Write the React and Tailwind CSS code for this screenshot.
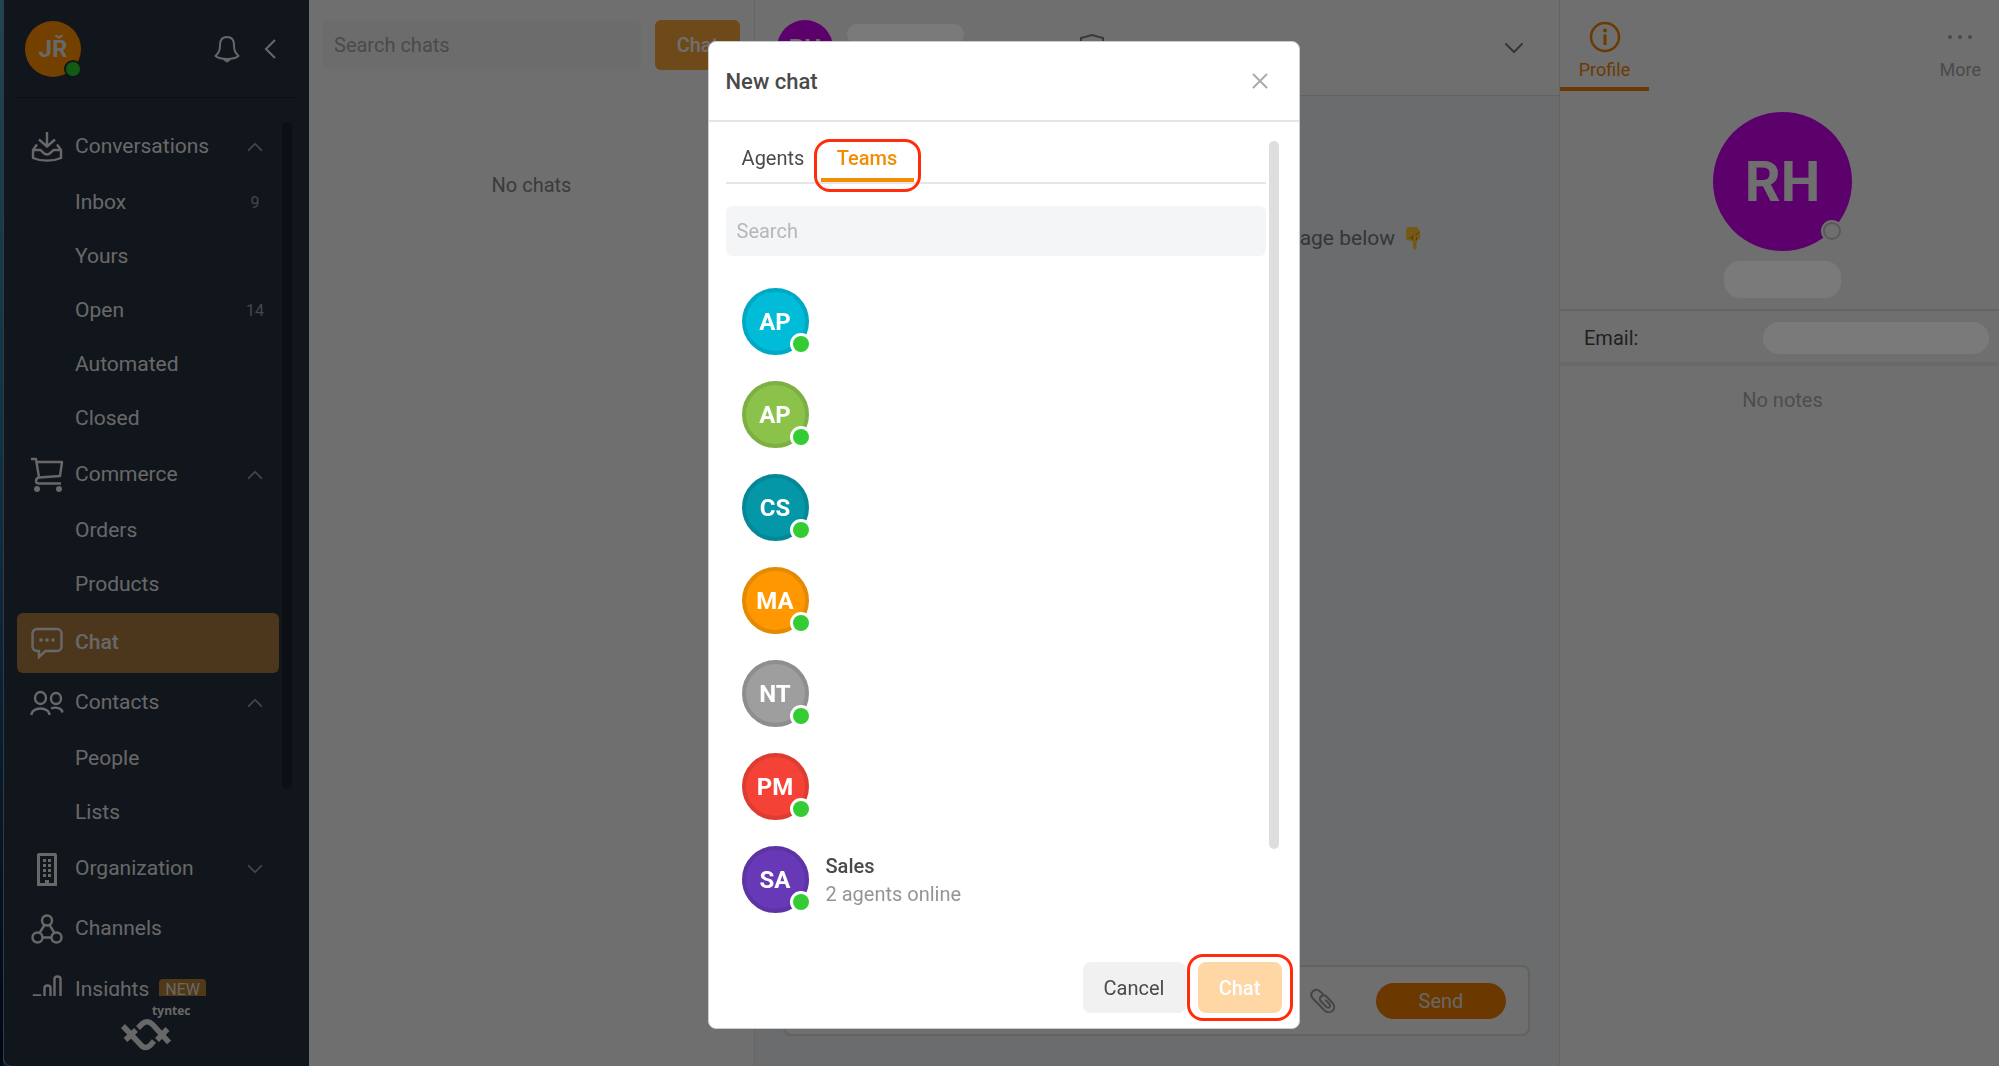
import React from 'react';
import clsx from 'clsx';

const Inbox = () => (
  <svg viewBox="0 0 32 32" className="size-8" fill="none" stroke="currentColor" strokeWidth="2.4" strokeLinejoin="round">
    <path d="M16 1v14M8 8.500l8 7 8-7" />
    <path d="M6 13.500l-4 5.500v8c8 3.500 20 3.500 28 0v-8l-4-5.500" />
    <path d="M2 19h7c2 0 2.500 4.500 7 4.500s5-4.500 7-4.500h7" />
  </svg>
);

const Cart = () => (
  <svg viewBox="0 0 34 36" className="h-9 w-[34px]" fill="none" stroke="currentColor" strokeWidth="2.4" strokeLinejoin="round">
    <path d="M1 2h5l3 18.500 21-1.500 2-14H7M9 20.500c-4 1-4 6 0 6h22" />
    <circle cx="7" cy="32" r="3" fill="currentColor" stroke="none" />
    <circle cx="29" cy="32" r="3" fill="currentColor" stroke="none" />
  </svg>
);

const Bubble = () => (
  <svg viewBox="0 0 32 32" className="size-8" fill="none" stroke="currentColor" strokeWidth="2.4">
    <path d="M6 2h20a4.500 4.500 0 0 1 4.500 4.500v13a4.500 4.500 0 0 1-4.500 4.500H14.500l-6.500 6v-6H6a4.500 4.500 0 0 1-4.500-4.500v-13A4.500 4.500 0 0 1 6 2z" />
    <g fill="currentColor" stroke="none">
      <circle cx="10" cy="13" r="1.8" />
      <circle cx="16" cy="13" r="1.8" />
      <circle cx="22" cy="13" r="1.8" />
    </g>
  </svg>
);

const People = () => (
  <svg viewBox="0 0 34 26" className="h-[26px] w-[34px]" fill="none" stroke="currentColor" strokeWidth="2.4">
    <ellipse cx="10.500" cy="8" rx="5.500" ry="6" />
    <ellipse cx="26" cy="8.500" rx="5" ry="5.500" />
    <path d="M1.500 25c0-4 4-6.500 9-6.500s9 2.500 9 6.500M21 18.500c5-2 11-.5 11.500 4" />
  </svg>
);

const Building = () => (
  <svg viewBox="0 0 20 33" className="h-[33px] w-5" fill="currentColor">
    <path d="M0 2a2 2 0 0 1 2-2h16a2 2 0 0 1 2 2v31H0zM3 3v27h5v-3h4v3h5V3z" fillRule="evenodd" />
    <path d="M6 6h3v3H6zM11 6h3v3h-3zM6 11h3v3H6zM11 11h3v3h-3zM6 16h3v3H6zM11 16h3v3h-3zM6 21h3v3H6zM11 21h3v3h-3z" />
  </svg>
);

const Channels = () => (
  <svg viewBox="0 0 32 30" className="h-[30px] w-8" fill="none" stroke="currentColor" strokeWidth="2.4">
    <circle cx="16" cy="6.500" r="5" />
    <circle cx="6.500" cy="23.500" r="5" />
    <circle cx="25.500" cy="23.500" r="5" />
    <path d="M13.500 11l-5 8M18.500 11l5 8M11.500 23.500h9" />
  </svg>
);

const Bars = () => (
  <svg viewBox="0 0 30 32" className="h-8 w-[30px]" fill="none" stroke="currentColor" strokeWidth="2.4">
    <path d="M2 32V21.500h6V32M12.500 32V14c0-1.500 1-2.500 3-2.500s3 1 3 2.500v18M22.500 32V5c0-1.500 1-2.500 3-2.500s3 1 3 2.500v27" />
  </svg>
);

const Chevron = ({ className }) => (
  <svg viewBox="0 0 20 12" className={className} fill="none" stroke="currentColor" strokeWidth="2">
    <path d="M1.500 1.500L10 10l8.500-8.500" />
  </svg>
);

const nav = [
  { icon: Inbox, label: 'Conversations', open: true, items: [['Inbox', 9], ['Yours'], ['Open', 14], ['Automated'], ['Closed']] },
  { icon: Cart, label: 'Commerce', open: true, items: [['Orders'], ['Products']] },
  { icon: Bubble, label: 'Chat', active: true },
  { icon: People, label: 'Contacts', open: true, items: [['People'], ['Lists']] },
  { icon: Building, label: 'Organization', open: false, items: [] },
  { icon: Channels, label: 'Channels' },
  { icon: Bars, label: 'Insights', badge: 'NEW' },
];

const teams = [
  { initials: 'AP', color: 'bg-[#00bcd9] border-[#00a9c3]' },
  { initials: 'AP', color: 'bg-[#8bc34a] border-[#7daf43]' },
  { initials: 'CS', color: 'bg-[#0497a8] border-[#048897]' },
  { initials: 'MA', color: 'bg-[#ff9800] border-[#e58900]' },
  { initials: 'NT', color: 'bg-[#9e9e9e] border-[#8e8e8e]' },
  { initials: 'PM', color: 'bg-[#f44336] border-[#dc3c31]' },
  { initials: 'SA', color: 'bg-[#6739b7] border-[#5d33a5]', name: 'Sales', status: '2 agents online' },
];

function NavGroup({ icon: Icon, label, active, open, items, badge }) {
  return (
    <li>
      <a
        href="#"
        className={clsx(
          'flex items-center pl-3 pr-4',
          items ? 'h-[58px]' : 'my-px h-[60px]',
          active && 'rounded-md bg-[#9f733e] font-medium'
        )}
      >
        <span className="mr-[10px] flex w-9 shrink-0 justify-center">
          <Icon />
        </span>
        {label}
        {badge && <span className="ml-[10px] rounded bg-[#a9752f] px-[6px] text-base leading-[22px]">{badge}</span>}
        {items && <Chevron className={clsx('ml-auto h-[10px] w-4 text-[#9a9a9a]', open && 'rotate-180')} />}
      </a>
      {items && (
        <ul>
          {items.map(([name, count]) => (
            <li key={name}>
              <a href="#" className="flex h-[54px] items-center justify-between pl-[58px] pr-[14px]">
                {name}
                {count && <span className="min-w-[20px] text-center text-base text-[#909396]">{count}</span>}
              </a>
            </li>
          ))}
        </ul>
      )}
    </li>
  );
}

function Sidebar() {
  return (
    <aside className="flex w-[306px] shrink-0 flex-col rounded-bl-lg border-l border-[#777] bg-[#252e3b] text-[#dadada]">
      <div className="mx-[13px] flex h-[98px] items-center border-b border-[#1b222b] pl-2 pr-5">
        <div className="relative flex size-14 items-center justify-center rounded-full bg-[#f08700] text-2xl font-bold">
          JŘ
          <span className="absolute bottom-px right-px size-[14px] rounded-full bg-[#27bf27] ring-2 ring-[#252e3b]" />
        </div>
        <button aria-label="Notifications" className="ml-auto">
          <svg viewBox="0 0 26 28" className="h-7 w-[26px]" fill="none" stroke="currentColor" strokeWidth="2" strokeLinejoin="round">
            <path d="M13 2c-5 0-7 3.500-7 8 0 6-1.500 8-4.500 11 5 4 18 4 23 0C21.500 18 20 16 20 10c0-4.500-2-8-7-8z" />
            <path d="M10 24.500l3 2 3-2" />
          </svg>
        </button>
        <button aria-label="Collapse menu" className="ml-6">
          <svg viewBox="0 0 12 20" className="h-5 w-3" fill="none" stroke="currentColor" strokeWidth="2">
            <path d="M11 1l-9 9 9 9" />
          </svg>
        </button>
      </div>
      <nav className="mt-5 flex min-h-0 flex-1 overflow-hidden text-[21px]">
        <ul className="ml-[13px] w-[262px]">
          {nav.map((group) => (
            <NavGroup key={group.label} {...group} />
          ))}
        </ul>
        <div className="ml-[3px] mt-1 h-[76%] w-[10px] rounded-full bg-[#1b2129]" />
      </nav>
      <div className="flex h-[70px] shrink-0 justify-center pr-[2px] pt-2">
        <div className="w-[70px]">
          <p className="text-right font-['Open_Sans',sans-serif] text-xs font-bold leading-[14px]">tyntec</p>
          <svg viewBox="0 0 50 34" className="h-[34px] w-[50px]" fill="none" stroke="currentColor" strokeWidth="5.500">
            <path d="M2 8l17.500 18.500c3 4 7 4 10.500 0L33 23" />
            <path d="M4.500 22L15 12" />
            <path d="M17 10l4-4c3-3 7-3 10 0l17 18.500" />
            <path d="M46.500 11L36 22" />
          </svg>
        </div>
      </div>
    </aside>
  );
}

function ChatList() {
  return (
    <section className="w-[446px] shrink-0 border-r border-[#d4d4d4]">
      <div className="flex items-start px-[14px] pt-5">
        <input
          aria-label="Search chats"
          placeholder="Search chats"
          className="mr-[14px] h-[49px] min-w-0 flex-1 rounded-md bg-[#e2e2e2] px-[11px] text-xl placeholder:text-[#9c9c9c]"
        />
        <button className="h-[50px] w-[85px] rounded-md bg-[#e79b3a] text-xl font-medium text-[#e9e9e9]">Chat</button>
      </div>
      <p className="mt-[101px] text-center text-xl text-[#7b7b7b]">No chats</p>
    </section>
  );
}

function Conversation() {
  return (
    <main className="flex min-w-0 flex-1 flex-col bg-[#dfe1e4]">
      <header className="flex h-24 items-center border-b border-[#cacaca] bg-[#e9e9e9] pl-[22px] pr-[35px]">
        <div className="flex size-14 items-center justify-center rounded-full bg-[#c000e0] text-2xl font-bold text-[#e9e9e9]">RH</div>
        <div className="mb-12 ml-[14px] mt-5 h-5 w-[117px] rounded-full bg-white" />
        <svg viewBox="0 0 24 28" className="ml-[116px] h-7 w-6 text-[#777]" fill="none" stroke="currentColor" strokeWidth="2">
          <path d="M1 15V4l11-3 11 3v11c0 6-5 10-11 12C6 25 1 21 1 15z" />
        </svg>
        <button aria-label="Show details" className="ml-auto text-[#6f6f6f]">
          <Chevron className="h-3 w-5" />
        </button>
      </header>
      <div className="flex flex-1 items-start justify-end gap-[10px] pr-[138px] pt-32 text-[21px] leading-[28px] text-[#707173]">
        <p>Start by typing a message below</p>
        <svg viewBox="0 0 16 24" className="mt-[2px] h-6 w-4">
          <path d="M2.500 1h9.500l3 4v7c0 1-1 2-2 2l-1.500.5V21.500c0 2.500-3.500 2.500-3.500 0V14.500H4.500C2.500 14.500 1 14 1 11.500V4z" fill="#f2bd2c" />
          <path d="M7.500 14.500V10M4 11.500c2 1 4 0 4-2.500M11.500 14.500V11M14.500 6l-4 3" stroke="#b87a14" strokeWidth="1" fill="none" />
        </svg>
      </div>
      <div className="mb-[30px] ml-7 mr-[29px] flex h-[71px] items-center rounded-lg border-2 border-[#ccc] bg-[#e9e9e9] pr-[22px]">
        <input aria-label="Message" className="min-w-0 flex-1 bg-transparent text-xl" />
        <button aria-label="Attach file" className="text-[#909090]">
          <svg viewBox="0 0 26 26" className="size-[26px]" fill="none" stroke="currentColor" strokeWidth="2" strokeLinecap="round">
            <path d="M12.500 5.500L9.500 3C5.500-.8-1.500 5 2.500 10l12 12.500c5.500 5 13-1.500 8-7.500l-6-6.500c-4-3.500-8.500 1-5.500 5l5.500 5.500c2.500 2 4.500-.5 3-3L16 12.500" />
          </svg>
        </button>
        <button className="ml-10 h-9 w-[130px] rounded-full bg-[#df7600] text-xl text-[#d8d8d8]">Send</button>
      </div>
    </main>
  );
}

function ProfilePanel() {
  return (
    <aside className="w-[440px] shrink-0 border-l border-[#cfcfcf]">
      <div className="flex h-[91px] justify-between text-lg">
        <button className="flex w-[89px] flex-col items-center border-b-4 border-[#e07a00] pt-[21px] text-[#e07a00]">
          <svg viewBox="0 0 32 32" className="size-8" fill="none" stroke="currentColor" strokeWidth="2.500">
            <circle cx="16" cy="16" r="14" />
            <path d="M16 13.500V24" strokeWidth="3" />
            <circle cx="16" cy="9.500" r="2" fill="currentColor" stroke="none" />
          </svg>
          <span className="mt-[3px]">Profile</span>
        </button>
        <button className="flex flex-col items-center pr-[18px] pt-[21px] text-[#9b9b9b]">
          <svg viewBox="0 0 24 32" className="h-8 w-6" fill="currentColor">
            <circle cx="2" cy="16" r="2" />
            <circle cx="12" cy="16" r="2" />
            <circle cx="22" cy="16" r="2" />
          </svg>
          <span className="mt-[3px]">More</span>
        </button>
      </div>
      <div className="flex flex-col items-center border-b-2 border-[#d2d2d2] pb-[11px] pl-[6px] pt-[21px]">
        <div className="relative flex size-[139px] items-center justify-center rounded-full bg-[#c000e0] text-[56px] font-bold text-[#e9e9e9]">
          RH
          <span className="absolute bottom-[11px] right-[11px] size-[18px] rounded-full border-2 border-[#bbb] bg-[#e9e9e9] ring-2 ring-[#e9e9e9]" />
        </div>
        <div className="mt-[10px] h-[37px] w-[117px] rounded-2xl bg-white" />
      </div>
      <div className="flex h-[55px] items-center justify-between border-b-4 border-[#dcdcdc] pl-6 pr-[10px] pt-[2px] text-xl text-[#444]">
        <span>Email:</span>
        <div className="h-8 w-[226px] rounded-full bg-white" />
      </div>
      <p className="mt-5 pl-[6px] text-center text-xl text-[#a1a1a1]">No notes</p>
    </aside>
  );
}

function NewChatDialog() {
  return (
    <div role="dialog" aria-labelledby="dialog-title" className="flex w-[592px] flex-col rounded-lg border border-[#ccc] bg-white text-[#4a4a4a]">
      <div className="flex h-20 shrink-0 items-center justify-between border-b-2 border-[#e4e4e4] pl-[17px] pr-[31px]">
        <h2 id="dialog-title" className="text-[22px] font-medium">New chat</h2>
        <button aria-label="Close" className="text-[#ababab]">
          <svg viewBox="0 0 16 16" className="size-4" fill="none" stroke="currentColor" strokeWidth="2" strokeLinecap="round">
            <path d="M1.500 1.500l13 13M14.500 1.500l-13 13" />
          </svg>
        </button>
      </div>

      <div className="flex min-h-0 flex-1 pl-[17px] pt-[18px]">
        <div className="w-[540px]">
          <div role="tablist" className="flex h-11 border-b-2 border-[#e6e6e6] text-xl">
            <button role="tab" aria-selected="false" className="h-[35px] w-[95px]">Agents</button>
            <button role="tab" aria-selected="true" className="relative h-[42px] w-[93px] border-b-4 border-[#f58b00] pb-[3px] font-medium text-[#f58b00]">
              Teams
              <span className="absolute -inset-x-[7px] -bottom-[14px] -top-px rounded-2xl border-3 border-[#ff2d0c]" />
            </button>
          </div>
          <input
            aria-label="Search teams"
            placeholder="Search"
            className="mt-[22px] h-[50px] w-full rounded-md bg-[#f4f5f7] px-[11px] text-xl placeholder:text-[#b7b7b7]"
          />
          <ul className="mt-8 space-y-[26px] pl-4">
            {teams.map((team, i) => (
              <li key={i} className="flex items-center gap-[17px]">
                <div className={clsx('relative flex size-[67px] items-center justify-center rounded-full border-4 text-2xl font-bold text-white', team.color)}>
                  {team.initials}
                  <span className="absolute -bottom-px -right-1 size-4 rounded-full bg-[#33cd33] ring-3 ring-white" />
                </div>
                {team.name && (
                  <div className="text-xl leading-7">
                    <p className="font-medium">{team.name}</p>
                    <p className="text-[#959595]">{team.status}</p>
                  </div>
                )}
              </li>
            ))}
          </ul>
        </div>
        <div className="ml-[3px] mt-px h-[708px] w-[10px] rounded-full bg-[#dedede]" />
      </div>

      <div className="flex shrink-0 justify-end gap-3 pb-[15px] pr-[17px] text-xl">
        <button className="h-[51px] w-[103px] rounded-lg bg-[#f1f1f1]">Cancel</button>
        <button className="relative h-[51px] w-[84px] rounded-lg bg-[#ffd7a5] font-medium text-white">
          Chat
          <span className="absolute -inset-x-[11px] -inset-y-2 rounded-2xl border-3 border-[#ff2d0c]" />
        </button>
      </div>
    </div>
  );
}

export default function App() {
  return (
    <div className="flex h-screen bg-[#10426b] font-['Roboto',sans-serif] text-[20px]">
      <div className="w-[3px] shrink-0 bg-linear-to-b from-[#3f93b3] via-[#1d5c8c] to-[#02102c]" />
      <div className="flex min-w-0 flex-1 rounded-bl-lg bg-[#e9e9e9]">
        <Sidebar />
        <ChatList />
        <Conversation />
        <ProfilePanel />
      </div>
      <div className="fixed inset-0 flex justify-center bg-black/52 pb-[37px] pl-2 pt-[41px]">
        <NewChatDialog />
      </div>
    </div>
  );
}
